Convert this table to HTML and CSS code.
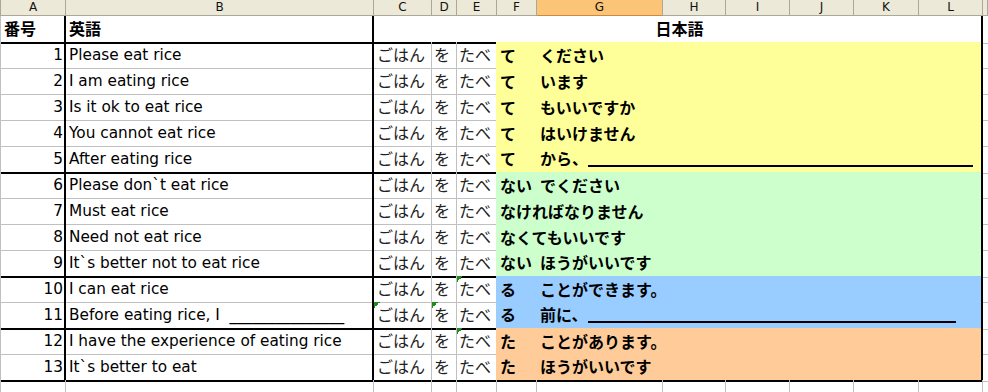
FILE: index.html
```html
<!DOCTYPE html>
<html lang="ja">
<head>
<meta charset="utf-8">
<title>Sheet</title>
<link rel="stylesheet" href="styles.css">
</head>
<body>
<div class="sheet">
  <div class="row hdr">
    <div class="ch first">A</div><div class="ch">B</div><div class="ch">C</div><div class="ch">D</div><div class="ch">E</div><div class="ch">F</div><div class="ch sel">G</div><div class="ch">H</div><div class="ch">I</div><div class="ch">J</div><div class="ch">K</div><div class="ch">L</div><div class="ch"></div>
  </div>

  <div class="row title end">
    <div class="cell a jp bold left">番号</div>
    <div class="cell b jp bold">英語</div>
    <div class="cell merged jp bold">日本語</div>
    <div class="cell m"></div>
  </div>

  <div class="row yellow">
    <div class="cell a">1</div><div class="cell b">Please eat rice</div>
    <div class="cell jp c">ごはん</div><div class="cell jp d">を</div><div class="cell jp e">たべ</div>
    <div class="fill"><span class="f">て</span><span class="g">ください</span></div><div class="cell m"></div>
  </div>
  <div class="row yellow">
    <div class="cell a">2</div><div class="cell b">I am eating rice</div>
    <div class="cell jp c">ごはん</div><div class="cell jp d">を</div><div class="cell jp e">たべ</div>
    <div class="fill"><span class="f">て</span><span class="g">います</span></div><div class="cell m"></div>
  </div>
  <div class="row yellow">
    <div class="cell a">3</div><div class="cell b">Is it ok to eat rice</div>
    <div class="cell jp c">ごはん</div><div class="cell jp d">を</div><div class="cell jp e">たべ</div>
    <div class="fill"><span class="f">て</span><span class="g">もいいですか</span></div><div class="cell m"></div>
  </div>
  <div class="row yellow">
    <div class="cell a">4</div><div class="cell b">You cannot eat rice</div>
    <div class="cell jp c">ごはん</div><div class="cell jp d">を</div><div class="cell jp e">たべ</div>
    <div class="fill"><span class="f">て</span><span class="g">はいけません</span></div><div class="cell m"></div>
  </div>
  <div class="row yellow end">
    <div class="cell a">5</div><div class="cell b">After eating rice</div>
    <div class="cell jp c">ごはん</div><div class="cell jp d">を</div><div class="cell jp e">たべ</div>
    <div class="fill"><span class="f">て</span><span class="g">から、<span class="blank blank-long"></span></span></div><div class="cell m"></div>
  </div>

  <div class="row green">
    <div class="cell a">6</div><div class="cell b">Please don`t eat rice</div>
    <div class="cell jp c">ごはん</div><div class="cell jp d">を</div><div class="cell jp e">たべ</div>
    <div class="fill"><span class="f">ない</span><span class="g">でください</span></div><div class="cell m"></div>
  </div>
  <div class="row green">
    <div class="cell a">7</div><div class="cell b">Must eat rice</div>
    <div class="cell jp c">ごはん</div><div class="cell jp d">を</div><div class="cell jp e">たべ</div>
    <div class="fill"><span class="f">なければなりません</span><span class="g"></span></div><div class="cell m"></div>
  </div>
  <div class="row green">
    <div class="cell a">8</div><div class="cell b">Need not eat rice</div>
    <div class="cell jp c">ごはん</div><div class="cell jp d">を</div><div class="cell jp e">たべ</div>
    <div class="fill"><span class="f">なくてもいいです</span><span class="g"></span></div><div class="cell m"></div>
  </div>
  <div class="row green end">
    <div class="cell a">9</div><div class="cell b">It`s better not to eat rice</div>
    <div class="cell jp c">ごはん</div><div class="cell jp d">を</div><div class="cell jp e">たべ</div>
    <div class="fill"><span class="f">ない</span><span class="g">ほうがいいです</span></div><div class="cell m"></div>
  </div>

  <div class="row blue">
    <div class="cell a">10</div><div class="cell b">I can eat rice</div>
    <div class="cell jp c">ごはん</div><div class="cell jp d">を</div><div class="cell jp e tri">たべ</div>
    <div class="fill"><span class="f">る</span><span class="g">ことができます。</span></div><div class="cell m"></div>
  </div>
  <div class="row blue end">
    <div class="cell a">11</div><div class="cell b">Before eating rice, I &nbsp;_______________</div>
    <div class="cell jp c tri">ごはん</div><div class="cell jp d tri">を</div><div class="cell jp e">たべ</div>
    <div class="fill"><span class="f">る</span><span class="g">前に、<span class="blank blank-mid"></span></span></div><div class="cell m"></div>
  </div>

  <div class="row orange">
    <div class="cell a">12</div><div class="cell b">I have the experience of eating rice</div>
    <div class="cell jp c">ごはん</div><div class="cell jp d">を</div><div class="cell jp e tri">たべ</div>
    <div class="fill"><span class="f">た</span><span class="g">ことがあります。</span></div><div class="cell m"></div>
  </div>
  <div class="row orange end">
    <div class="cell a">13</div><div class="cell b">It`s better to eat</div>
    <div class="cell jp c">ごはん</div><div class="cell jp d">を</div><div class="cell jp e">たべ</div>
    <div class="fill"><span class="f">た</span><span class="g">ほうがいいです</span></div><div class="cell m"></div>
  </div>

  <div class="row blankrow">
    <div class="cell a"></div><div class="cell b"></div>
    <div class="cell"></div><div class="cell"></div><div class="cell"></div><div class="cell"></div><div class="cell"></div><div class="cell"></div><div class="cell"></div><div class="cell"></div><div class="cell"></div><div class="cell"></div><div class="cell m"></div>
  </div>
</div>
</body>
</html>
```

FILE: styles.css
```css
* { box-sizing: border-box; }

html, body {
  margin: 0;
  padding: 0;
  background: #fff;
  overflow: hidden;
}

body {
  width: 988px;
  height: 392px;
  font-family: "DejaVu Sans", "Noto Sans CJK JP", sans-serif;
  font-size: 15.3px;
  color: #000;
}

.sheet {
  width: 988px;
}

.row {
  display: grid;
  grid-template-columns: 66px 308px 58px 25px 40px 40px 126px 63px 64px 64px 65px 64px 1fr;
  height: 26px;
}

.row.hdr { height: 16px; }

/* column headers */
.ch {
  background: #ece9d8;
  border-right: 1px solid #aca899;
  border-bottom: 1px solid #aca899;
  display: flex;
  align-items: center;
  justify-content: center;
  font-family: "DejaVu Sans", sans-serif;
  font-size: 12px;
  line-height: 15px;
  color: #111;
}
.ch.first { border-left: 1px solid #aca899; }
.ch.sel {
  background: #fbc477;
  border-bottom-color: #d0893c;
}

/* cells */
.cell {
  border-right: 1px solid #c0c0c0;
  border-bottom: 1px solid #c0c0c0;
  display: flex;
  align-items: center;
  white-space: nowrap;
  padding: 0 2px 1px;
  overflow: visible;
}

.jp {
  font-family: "Noto Sans CJK JP", sans-serif;
  font-size: 16px;
  color: #222;
  padding-bottom: 2px;
}
.bold { font-weight: 700; color: #000; }

.a {
  border-left: 1px solid #c0c0c0;
  border-right: 2px solid #000;
  justify-content: flex-end;
  padding-right: 1px;
}
.a.left { justify-content: flex-start; padding-left: 3px; }

.b {
  border-right: 2px solid #000;
  padding-left: 3px;
}

.c { padding-left: 3px; }
.d { padding-left: 2px; }
.e { padding-left: 2px; }

.merged {
  grid-column: 3 / 13;
  border-right: 2px solid #000;
  justify-content: center;
  padding-left: 6px;
}

.m { border-right: none; }

/* section ends */
.end .cell,
.end .fill { border-bottom: 2px solid #000; }
.end .cell.m { border-bottom: 1px solid #c0c0c0; }

/* blank row at the bottom: plain gridlines */
.blankrow .a { border-right: 1px solid #c0c0c0; }
.blankrow .b { border-right: 1px solid #c0c0c0; }

/* coloured area F:L */
.fill {
  grid-column: 6 / 13;
  border-right: 2px solid #000;
  display: flex;
  align-items: center;
  padding-bottom: 2px;
  font-family: "Noto Sans CJK JP", sans-serif;
  font-size: 16px;
  font-weight: 700;
  white-space: nowrap;
}
.fill .f {
  flex: 0 0 40px;
  padding-left: 3px;
  overflow: visible;
}
.fill .g {
  padding-left: 3px;
  display: flex;
  align-items: center;
}

.yellow .fill { background: #ffff99; }
.green .fill { background: #ccffcc; }
.blue .fill { background: #99ccff; }
.orange .fill { background: #ffcc99; }

.yellow .e { border-right-color: #ffff99; }
.green .e { border-right-color: #ccffcc; }
.blue .e { border-right-color: #99ccff; }
.orange .e { border-right-color: #ffcc99; }

.blank {
  display: inline-block;
  height: 13px;
  margin-top: 4px;
  border-bottom: 2px solid #000;
}
.blank-long { width: 385px; }
.blank-mid { width: 368px; }

/* error indicator triangle */
.tri {
  background: linear-gradient(135deg, #1e8c1e 50%, transparent 50%) no-repeat 0 0 / 6px 6px;
}
```
